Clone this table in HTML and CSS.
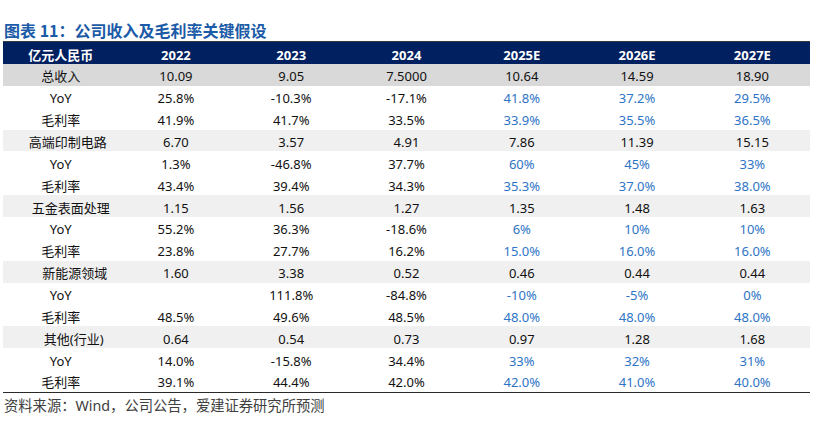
FILE: index.html
```html
<!DOCTYPE html>
<html lang="zh-CN">
<head>
<meta charset="utf-8">
<title>图表 11：公司收入及毛利率关键假设</title>
<link rel="stylesheet" href="styles.css">
</head>
<body>
<div class="page">
  <div class="title">图表 11：公司收入及毛利率关键假设</div>
  <div class="table">
    <div class="row head">
      <div class="cell">亿元人民币</div><div class="cell">2022</div><div class="cell">2023</div><div class="cell">2024</div><div class="cell">2025E</div><div class="cell">2026E</div><div class="cell">2027E</div>
    </div>
    <div class="row total">
      <div class="cell">总收入</div><div class="cell">10.09</div><div class="cell">9.05</div><div class="cell">7.5000</div><div class="cell">10.64</div><div class="cell">14.59</div><div class="cell">18.90</div>
    </div>
    <div class="row">
      <div class="cell">YoY</div><div class="cell">25.8%</div><div class="cell">-10.3%</div><div class="cell">-17.1%</div><div class="cell est">41.8%</div><div class="cell est">37.2%</div><div class="cell est">29.5%</div>
    </div>
    <div class="row">
      <div class="cell">毛利率</div><div class="cell">41.9%</div><div class="cell">41.7%</div><div class="cell">33.5%</div><div class="cell est">33.9%</div><div class="cell est">35.5%</div><div class="cell est">36.5%</div>
    </div>
    <div class="row seg">
      <div class="cell seg-pcb">高端印制电路</div><div class="cell">6.70</div><div class="cell">3.57</div><div class="cell">4.91</div><div class="cell">7.86</div><div class="cell">11.39</div><div class="cell">15.15</div>
    </div>
    <div class="row">
      <div class="cell">YoY</div><div class="cell">1.3%</div><div class="cell">-46.8%</div><div class="cell">37.7%</div><div class="cell est">60%</div><div class="cell est">45%</div><div class="cell est">33%</div>
    </div>
    <div class="row">
      <div class="cell">毛利率</div><div class="cell">43.4%</div><div class="cell">39.4%</div><div class="cell">34.3%</div><div class="cell est">35.3%</div><div class="cell est">37.0%</div><div class="cell est">38.0%</div>
    </div>
    <div class="row seg">
      <div class="cell seg-metal">五金表面处理</div><div class="cell">1.15</div><div class="cell">1.56</div><div class="cell">1.27</div><div class="cell">1.35</div><div class="cell">1.48</div><div class="cell">1.63</div>
    </div>
    <div class="row">
      <div class="cell">YoY</div><div class="cell">55.2%</div><div class="cell">36.3%</div><div class="cell">-18.6%</div><div class="cell est">6%</div><div class="cell est">10%</div><div class="cell est">10%</div>
    </div>
    <div class="row">
      <div class="cell">毛利率</div><div class="cell">23.8%</div><div class="cell">27.7%</div><div class="cell">16.2%</div><div class="cell est">15.0%</div><div class="cell est">16.0%</div><div class="cell est">16.0%</div>
    </div>
    <div class="row seg">
      <div class="cell seg-energy">新能源领域</div><div class="cell">1.60</div><div class="cell">3.38</div><div class="cell">0.52</div><div class="cell">0.46</div><div class="cell">0.44</div><div class="cell">0.44</div>
    </div>
    <div class="row">
      <div class="cell">YoY</div><div class="cell"></div><div class="cell">111.8%</div><div class="cell">-84.8%</div><div class="cell est">-10%</div><div class="cell est">-5%</div><div class="cell est">0%</div>
    </div>
    <div class="row">
      <div class="cell">毛利率</div><div class="cell">48.5%</div><div class="cell">49.6%</div><div class="cell">48.5%</div><div class="cell est">48.0%</div><div class="cell est">48.0%</div><div class="cell est">48.0%</div>
    </div>
    <div class="row seg">
      <div class="cell seg-other">其他(行业)</div><div class="cell">0.64</div><div class="cell">0.54</div><div class="cell">0.73</div><div class="cell">0.97</div><div class="cell">1.28</div><div class="cell">1.68</div>
    </div>
    <div class="row">
      <div class="cell">YoY</div><div class="cell">14.0%</div><div class="cell">-15.8%</div><div class="cell">34.4%</div><div class="cell est">33%</div><div class="cell est">32%</div><div class="cell est">31%</div>
    </div>
    <div class="row last">
      <div class="cell">毛利率</div><div class="cell">39.1%</div><div class="cell">44.4%</div><div class="cell">42.0%</div><div class="cell est">42.0%</div><div class="cell est">41.0%</div><div class="cell est">40.0%</div>
    </div>
  </div>
  <div class="source">资料来源：Wind，公司公告，爱建证券研究所预测</div>
</div>
</body>
</html>
```

FILE: styles.css
```css
html, body {
  margin: 0;
  padding: 0;
  background: #ffffff;
}

body {
  font-family: "Noto Sans", "Noto Sans CJK SC", sans-serif;
  color: #111111;
}

.page {
  width: 829px;
  height: 425px;
  padding-top: 19px;
  box-sizing: border-box;
}

.title {
  margin-left: 4px;
  height: 22px;
  line-height: 22px;
  font-size: 16px;
  font-weight: 700;
  color: #1c5ba7;
  font-family: "Noto Sans CJK SC", sans-serif;
}

.table {
  margin-left: 3px;
  width: 807px;
  display: flex;
  flex-direction: column;
}

.row {
  display: grid;
  grid-template-columns: repeat(7, 1fr);
  height: 21.87px;
  align-items: center;
  font-size: 13px;
}

.cell {
  text-align: center;
  line-height: 16px;
  padding-top: 3px;
  white-space: nowrap;
}

.head {
  height: 23px;
  background: #002060;
  color: #ffffff;
  font-weight: 700;
  border-top: 1px solid #3a3a3a;
  box-sizing: border-box;
}

.total {
  background: #d9d9d9;
}

.seg {
  background: #f0f0f0;
}

.last {
  border-bottom: 1px solid #2a2a2a;
}

.est {
  color: #2e74c6;
}

.seg-pcb { padding-left: 14px; }
.seg-metal { padding-left: 20px; }
.seg-energy { padding-left: 28px; }
.seg-other { padding-left: 26px; }

.source {
  margin-left: 4px;
  margin-top: 3px;
  font-size: 14.3px;
  line-height: 20px;
  color: #404040;
}
```
